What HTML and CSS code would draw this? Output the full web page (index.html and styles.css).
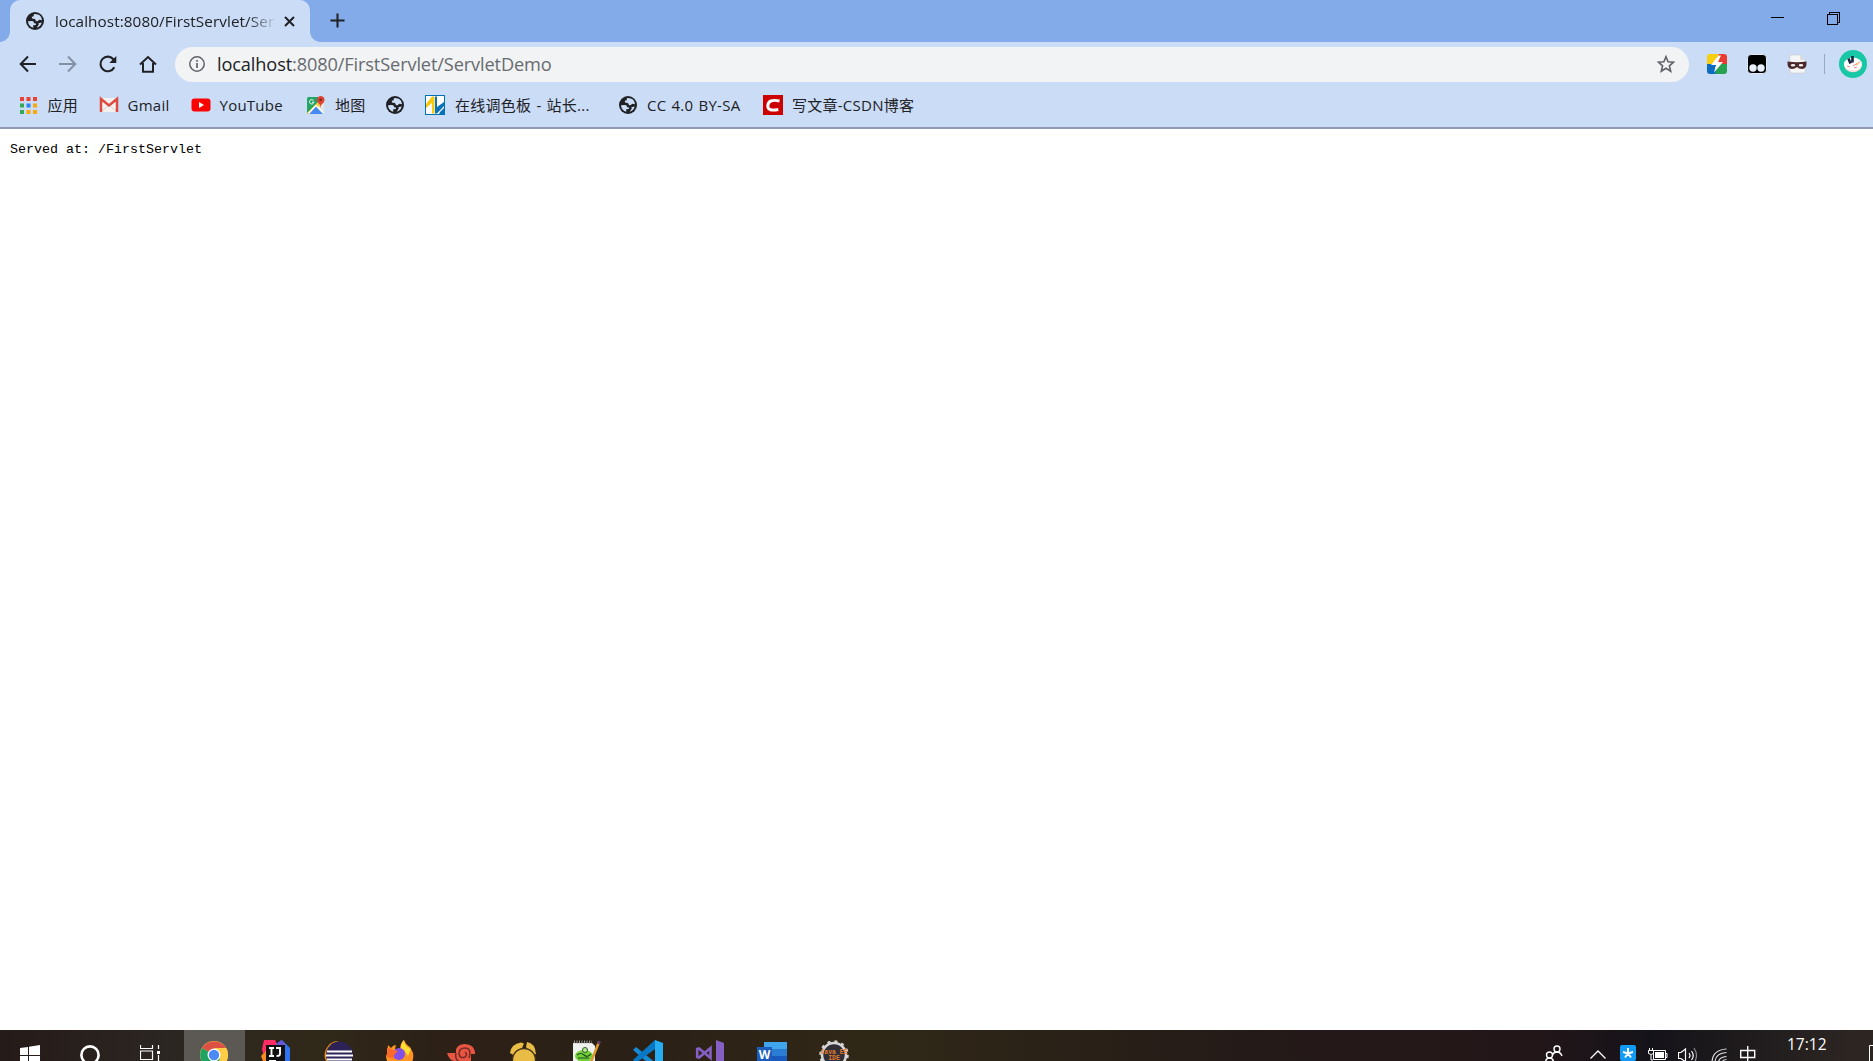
FILE: index.html
```html
<!DOCTYPE html>
<html lang="zh-CN">
<head>
    <meta charset="UTF-8">
    <title>localhost:8080/FirstServlet/ServletDemo</title>
    <link rel="stylesheet" href="styles.css">
</head>
<body>
    <svg class="defs">
        <symbol id="globe" viewBox="0 0 18 18">
            <circle cx="9" cy="9" r="9" fill="#202124"/>
            <path d="M2 9.200 5.600 9.100C7.300 9 8 9.800 8.100 11.200L10 11.400 9.900 13 7.200 13.200 7.300 15.800C4.300 15.200 2.200 12.600 2 9.200ZM8.600 2.100C7.800 2.500 7.500 3.200 7.800 4.300L5.800 4.700 6 6.600 8.700 6.900C9.900 7.100 9.300 9 10.800 9.200 12.600 9.400 12.400 7.600 13.600 7.700L15.900 8.200C15.900 4.800 13.300 2 8.600 2.100ZM15.700 10.500C15 13.400 13.200 15.200 10.600 15.800L12.800 12.600 12.400 11.200Z" fill="#cbdcf6"/>
        </symbol>
    </svg>

    <div class="tab-strip">
        <div class="tab-prev"></div>
        <div class="tab">
            <svg class="favicon"><use href="#globe"/></svg>
            <span class="tab-title">localhost:8080/FirstServlet/Ser</span>
            <svg class="tab-close" viewBox="0 0 11 11"><path d="M1 1l9 9M10 1l-9 9" stroke="#202124" stroke-width="2"/></svg>
        </div>
        <div class="tab-next"></div>
        <svg class="new-tab" viewBox="0 0 16 16"><path d="M8 .5v15M.5 8h15" stroke="#202124" stroke-width="2.200"/></svg>
        <div class="window-buttons">
            <svg width="13" height="13" shape-rendering="crispEdges"><path d="M0 5.500h13" stroke="#000"/></svg>
            <svg width="13" height="13" shape-rendering="crispEdges"><path d="M.5 2.500h10v10H.5zM2.500 2V.5h10v10H11" fill="none" stroke="#000"/></svg>
        </div>
    </div>

    <div class="toolbar">
        <div class="nav-buttons">
            <svg viewBox="0 0 18 18"><path d="M17 9H2M9 1.500 1.700 9 9 16.500" fill="none" stroke="#202124" stroke-width="2"/></svg>
            <svg viewBox="0 0 18 18"><path d="M0 9h15M9 1.500 16.300 9 9 16.500" fill="none" stroke="#8690a3" stroke-width="2"/></svg>
            <svg viewBox="0 0 18 18"><path d="M15.300 12.300A7.300 7.300 0 1 1 14.600 4.500" fill="none" stroke="#202124" stroke-width="2.100"/><path d="M17.300 1v7h-7z" fill="#202124"/></svg>
            <svg viewBox="0 0 18 18"><path d="M1 9.500 9 2l8 7.500M4 8v8.700h10V8" fill="none" stroke="#202124" stroke-width="2"/></svg>
        </div>
        <div class="omnibox">
            <svg class="info" viewBox="0 0 16 16"><circle cx="8" cy="8" r="7.200" fill="none" stroke="#5f6368" stroke-width="1.500"/><path d="M8 7v5M8 4v1.700" stroke="#5f6368" stroke-width="1.700"/></svg>
            <span class="url"><span class="host">localhost</span>:8080/FirstServlet/ServletDemo</span>
            <svg class="star" viewBox="0 0 18 18"><path d="M9 1.700l2.100 5.100 5.500.4-4.200 3.600 1.300 5.400L9 13.300l-4.700 2.900 1.300-5.400L1.400 7.200l5.500-.4z" fill="none" stroke="#5f6368" stroke-width="1.600"/></svg>
        </div>
        <div class="extensions">
            <svg width="20" height="20" viewBox="0 0 20 20">
                <path d="M3 0h9L9 10H0V3q0-3 3-3z" fill="#f6cf10"/>
                <path d="M12 0h5q3 0 3 3v7H8z" fill="#e83a30"/>
                <path d="M0 10h11L9 20H3q-3 0-3-3z" fill="#0b6cc0"/>
                <path d="M11 10h9v7q0 3-3 3H8z" fill="#28a153"/>
                <path d="M11.500 1.500 4 11h5L7 18.500 16 8h-5l3-6.500z" fill="#fff"/>
            </svg>
            <svg width="20" height="20" viewBox="0 0 20 20">
                <rect x=".5" y=".5" width="19" height="19" rx="3.500" fill="#000" stroke="#dfe8f7"/>
                <circle cx="6" cy="14" r="3.700" fill="#e8effb"/><circle cx="14" cy="14" r="3.700" fill="#e8effb"/>
            </svg>
            <svg width="20" height="20" viewBox="0 0 20 20">
                <path d="M3 1h10l5 5v13H3z" fill="#f5f5f5" stroke="#ccc" stroke-width=".6"/><path d="M13 1v5h5" fill="#ddd"/>
                <path d="M.5 7.500Q10 9 19.500 7.500 20 15 15 15q-3 0-5-2-2 2-5 2-5 0-4.500-7.500z" fill="#4a2729"/>
                <ellipse cx="6" cy="11.300" rx="2.300" ry="1.200" fill="#eee"/><ellipse cx="14" cy="11.300" rx="2.300" ry="1.200" fill="#eee"/>
            </svg>
        </div>
        <div class="separator"></div>
        <svg class="avatar" viewBox="0 0 28 28">
            <circle cx="14" cy="14" r="14" fill="#17c7a5"/>
            <path d="M5 14c0 11 18 11 18 0z" fill="#f8dcd9"/>
            <ellipse cx="14" cy="14" rx="9" ry="6.500" fill="#fff"/>
            <path d="M9.500 8.500l2 5M13.500 6v6.500" stroke="#15243c" stroke-width="2.600"/>
            <path d="M14 16l7-4M8 16l3 1M15 18l3-1" stroke="#e98b87"/><circle cx="18" cy="14" r="1" fill="#f5c547"/>
        </svg>
    </div>

    <div class="bookmarks">
        <div class="bookmark apps">
            <svg width="17" height="17" viewBox="0 0 17 17">
                <path d="M0 0h4v4H0zM6.500 0h4v4h-4zM13 0h4v4h-4z" fill="#ea4335"/>
                <path d="M0 6.500h4v4H0zM0 13h4v4H0z" fill="#34a853"/><path d="M6.500 6.500h4v4h-4z" fill="#2b83f6"/>
                <path d="M13 6.500h4v4h-4zM6.500 13h4v4h-4zM13 13h4v4h-4z" fill="#fba70d"/>
            </svg>
            <span>应用</span>
        </div>
        <div class="bookmark gmail">
            <svg width="20" height="20" viewBox="0 0 20 20">
                <path d="M1 3h18v14H1z" fill="#f4f0f0"/><path d="M3 16l7-6 7 6" fill="none" stroke="#d5d3d3"/>
                <path d="M2 17V4l8 6.500L18 4v13" fill="none" stroke="#dd4b3e" stroke-width="2.500"/>
            </svg>
            <span>Gmail</span>
        </div>
        <div class="bookmark youtube">
            <svg width="20" height="20" viewBox="0 0 20 20"><rect x=".5" y="3.500" width="19" height="13" rx="3" fill="#f00"/><path d="M8 7v6l5-3z" fill="#fff"/></svg>
            <span>YouTube</span>
        </div>
        <div class="bookmark maps">
            <svg width="20" height="20" viewBox="0 0 20 20">
                <rect x="1" y="2" width="17" height="17" rx="1.500" fill="#23a566"/>
                <path d="M18 7v12L10 11z" fill="#e4e6e8"/><path d="M1 18 14 5l3 3L6 19H2z" fill="#ffd23f"/>
                <path d="M3 19l7-8 7 8z" fill="#4889f4"/><path d="M2.500 18.500l7.500-8 7.500 8" fill="none" stroke="#fff" stroke-width="1.300"/>
                <path d="M7.500 5.500a2.200 2.200 0 1 0 .4 1.700H6" fill="none" stroke="#fff"/>
                <path d="M14.500 13q-.3-4-2.700-5.500C9.500 4 12 1 14.800 1s5.200 3 2.800 6.500Q15 9 14.500 13z" fill="#e04437"/><circle cx="14.700" cy="4.700" r="1.500" fill="#8d2926"/>
            </svg>
            <span>地图</span>
        </div>
        <div class="bookmark blank"><svg class="favicon"><use href="#globe"/></svg></div>
        <div class="bookmark palette">
            <svg width="20" height="20" viewBox="0 0 20 20">
                <rect x=".5" y=".5" width="19" height="19" fill="#fff" stroke="#0070b8"/>
                <path d="M1 9 7 1.500h2.500v17H7V8l-6 5z" fill="#f6c90e"/><path d="M10 1.500h2V12l7-5v4l-7 7.500h-2z" fill="#0873bb"/><path d="M15 17l4-4v6h-5z" fill="#0873bb"/>
            </svg>
            <span>在线调色板 - 站长...</span>
        </div>
        <div class="bookmark cc">
            <svg class="favicon"><use href="#globe"/></svg>
            <span>CC 4.0 BY-SA</span>
        </div>
        <div class="bookmark csdn">
            <svg width="20" height="20" viewBox="0 0 20 20"><path d="M0 0h20v20H0z" fill="#c00"/><path d="M16.500 6Q5 3.500 4.800 11q0 5.700 10.500 3.500" fill="none" stroke="#fff" stroke-width="3"/></svg>
            <span>写文章-CSDN博客</span>
        </div>
    </div>

    <div class="page">Served at: /FirstServlet</div>

    <div class="taskbar">
        <div class="system">
            <div class="task"><svg width="20" height="20" viewBox="0 0 20 20"><path d="M0 3l8-1v8H0zM9 1.800 20 0v10H9zM0 11h8v8l-8-1zM9 11h11v9L9 19z" fill="#fff"/></svg></div>
            <div class="task"><svg width="20" height="20" viewBox="0 0 20 20"><circle cx="10" cy="10" r="8.600" fill="none" stroke="#fff" stroke-width="2.600"/></svg></div>
            <div class="task"><svg width="20" height="20" viewBox="0 0 20 20"><path d="M.5 0v3.500h12V0M.5 6h12v8.500H.5zM.5 20v-3.500h12V20M18.500 0v4M18.500 10v10" fill="none" stroke="#fff" stroke-width="1.200"/><path d="M17 6h3v3h-3z" fill="#fff"/></svg></div>
        </div>
        <div class="apps-row">
            <div class="task active"><svg class="app" viewBox="0 0 28 28">
                <circle cx="14" cy="14" r="14" fill="#ffcd46"/><path d="M14 14 2 7a14 14 0 0 1 24 0z" fill="#dd5144"/><path d="M2 7a14 14 0 0 0 12 21l6-10-6-4z" fill="#1da362"/><path d="M14 7h12.100L22 14z" fill="#dd5144"/><path d="M14 7h12.100a14 14 0 0 1-6 19.600L20 14z" fill="#ffcd46"/>
                <circle cx="14" cy="14" r="6.500" fill="#fff"/><circle cx="14" cy="14" r="5.200" fill="#4c8bf5"/></svg></div>
            <div class="task"><svg class="app wide" viewBox="0 0 30 30">
                <path d="M3 0h11l3 6-4 12H3L1 9z" fill="#ff2d63"/><path d="M0 16l5-5v10H2z" fill="#fa8c24"/><path d="M15 4l6-4 8 8v22H15z" fill="#2e74f0"/><path d="M16 4l4-4 5 5-5 4z" fill="#6856d8"/><path d="M5 5h19v19H5z" fill="#111"/>
                <path d="M8 8h5M10.500 8v8M8 16h5M15 8h4v6q0 2-3.500 2" fill="none" stroke="#fff" stroke-width="1.900"/><path d="M8 21h7" stroke="#fff" stroke-width="2"/></svg></div>
            <div class="task"><svg class="app wide" viewBox="0 0 30 30">
                <path d="M16 1A14 14 0 0 0 5 24l4-2L8 4z" fill="#f7941e"/><circle cx="16.500" cy="15" r="13.500" fill="#2c2255"/><path d="M4 11.500h25M3 15.500h27M4 19.500h25" stroke="#fff" stroke-width="2.200"/></svg></div>
            <div class="task"><svg class="app wide" viewBox="0 0 30 30">
                <path d="M2 14 3 5l3 3q2-3 5-3l-1 4 5 1q0-7 4-10 2 5 6 7l2 4q2 2 1 8-2 9-14 9T1 16z" fill="#ff9323"/><path d="M19 0q0 6 7 9l-3 7-4-6-3-2q0-5 3-8z" fill="#ffdf34"/><circle cx="14" cy="14" r="6" fill="#8150e8"/><path d="M2 8q3 0 6 2l5 1-3 3q-3 3 0 5l-8-2z" fill="#ff6a2b"/></svg></div>
            <div class="task"><svg class="app wide" viewBox="0 0 30 30">
                <path d="M0 13h9q-1-8 8-9 11 0 11 10H24v9q-10 5-17-2-5-1-7-8z" fill="#e85643"/><path d="M22 18q3-10-4-10-6 0-6 6 1 5 6 3 3-3 0-5M9 13q-2 9 8 10" fill="none" stroke="#722b23" stroke-width="1.500"/></svg></div>
            <div class="task"><svg class="app wide" viewBox="0 0 30 30">
                <path d="M1 13Q2 4 12 2.500l3 1-3 7-7 5zM18 2q8 1 9 12l-4 1-6-8z" fill="#e9bd45"/><circle cx="15" cy="20" r="11.500" fill="#e9bd45" stroke="#43311c" stroke-width="1.400"/></svg></div>
            <div class="task"><svg class="app wide" viewBox="0 0 30 30">
                <path d="M2 3h19l3 3v24H2z" fill="#eef1ee"/><path d="M3 2h18" stroke="#999" stroke-width="3" stroke-dasharray="1 1.500"/><ellipse cx="13" cy="16" rx="9" ry="6" fill="#72cf38"/><circle cx="14" cy="10" r="2.500" fill="#b5ed8e" stroke="#34572e"/><path d="M6 15q4-3 7 0t7-1M7 18h11" fill="none" stroke="#1c4a1c" stroke-width="1.200"/><path d="M28 2 20 22" stroke="#d99a31" stroke-width="2.600"/><path d="M28.500 1l-1 3" stroke="#5e3b62" stroke-width="3"/></svg></div>
            <div class="task"><svg class="app wide" viewBox="0 0 30 30">
                <path d="M0 10l3-3 20 16v7z" fill="#168ad4"/><path d="M0 20 22 0v9L3 23z" fill="#0878c5"/><path d="M22 0l8 3v27h-8z" fill="#27adf2"/></svg></div>
            <div class="task"><svg class="app wide" viewBox="0 0 30 30">
                <path d="M21 0l8 3v24l-8 3z" fill="#865fc5"/><path d="M2.200 9 4 8.500l11.500 9.500V8L4 17.500 2.200 17z" fill="none" stroke="#865fc5" stroke-width="2.600"/></svg></div>
            <div class="task"><svg class="app wide" viewBox="0 0 30 30">
                <path d="M7 2h23v7H7z" fill="#41a5ee"/><path d="M7 9h23v7H7z" fill="#2b7cd3"/><path d="M7 16h23v14H7z" fill="#185abd"/><path d="M0 7h15v15H0z" fill="#1b5cbf"/><text x="7.500" y="18.500" class="word-letter">W</text></svg></div>
            <div class="task"><svg class="app wide" viewBox="0 0 30 30">
                <circle cx="15" cy="15" r="12" fill="#302f38" stroke="#d6d6d6" stroke-width="2.500"/><circle cx="15" cy="15" r="13.500" fill="none" stroke="#d6d6d6" stroke-width="2.500" stroke-dasharray="3 4.070"/><text x="15" y="13.500" class="jee">Java EE</text><text x="15" y="19.500" class="jee">IDE</text></svg></div>
        </div>
        <div class="tray">
            <svg class="people" viewBox="0 0 18 18"><g fill="none" stroke="#fff" stroke-width="1.400"><circle cx="12" cy="4" r="3"/><path d="M7.500 10q1-3 4.500-3t5 4"/><circle cx="4.500" cy="10" r="3"/><path d="M.5 18q0-5 4-5t4 5"/></g></svg>
            <svg class="caret" viewBox="0 0 16 16"><path d="M.5 13.500 8 6l7.500 7.500" fill="none" stroke="#fff" stroke-width="1.300"/></svg>
            <svg class="asterisk" viewBox="0 0 16 16"><rect width="16" height="16" rx="2" fill="#129bf4"/><path d="M8 3v5.500M3 7l5 1.500L13 7M5 12.500l3-4 3 4" stroke="#fff" stroke-width="2" fill="none"/></svg>
            <svg class="battery" viewBox="0 0 20 16"><path d="M5.500 2.500h12v9h-12zM18 5.500h1v4h-1" fill="none" stroke="#fff"/><path d="M7 4h9v6H7z" fill="#fff"/><path d="M1.500 2V0M4.500 2V0M.5 2.500h5v3q-2.500 2-5 0zM3 7v5h2" fill="none" stroke="#fff"/></svg>
            <svg class="volume" viewBox="0 0 20 16"><g fill="none" stroke="#fff" stroke-width="1.200"><path d="M.5 5.500H3L7.500 2v13L3 11.500H.5zM11 6q2 2.500 0 5M13.500 4q3.500 4.500 0 9"/><path d="M16 1q5 7.500 0 15" opacity=".5"/></g></svg>
            <svg class="wifi" viewBox="0 0 16 16"><g fill="none" stroke="#ddd" stroke-width="1.200"><path d="M1 16Q1 3 15.500 2M4 16Q4 6 15.500 5.500M7.500 16q0-6 8-6.500M11 16q0-3 4.500-3.500"/></g></svg>
            <svg class="ime" viewBox="0 0 16 16"><path d="M.7 5.500h14v7H.7zM7.700 1v15" fill="none" stroke="#fff" stroke-width="1.400"/></svg>
            <span class="clock">17:12</span>
            <svg class="notice" viewBox="0 0 4 16"><path d="M4 .5H.5V16" fill="none" stroke="#fff"/></svg>
        </div>
    </div>
</body>
</html>
```
FILE: styles.css
```css
* {
    margin: 0;
    padding: 0;
    box-sizing: border-box;
}

body {
    height: 100vh;
    display: flex;
    flex-direction: column;
    overflow: hidden;
    background: #fff;
    color: #202124;
    font-family: "Open Sans", "Noto Sans CJK SC", sans-serif;
}

svg {
    display: block;
    flex-shrink: 0;
}

.defs {
    display: none;
}

.favicon {
    width: 18px;
    height: 18px;
}

/* tabs */
.tab-strip {
    height: 42px;
    flex-shrink: 0;
    display: flex;
    background: #84abe9;
}

.tab-prev,
.tab-next {
    width: 10px;
    height: 10px;
    margin-top: 32px;
}

.tab-prev {
    background: radial-gradient(circle at 0 0, transparent 9.5px, #cbdcf6 10px);
}

.tab-next {
    background: radial-gradient(circle at 100% 0, transparent 9.5px, #cbdcf6 10px);
}

.tab {
    width: 300px;
    display: flex;
    align-items: center;
    padding: 0 15px 0 16px;
    border-radius: 10px 10px 0 0;
    background: #cbdcf6;
}

.tab-title {
    width: 219px;
    margin-left: 11px;
    white-space: nowrap;
    font-size: 15.3px;
    letter-spacing: 0.07px;
    mask-image: linear-gradient(90deg, #000 192px, transparent 222px);
}

.tab-close {
    width: 11px;
    height: 11px;
    margin-left: 10px;
}

.new-tab {
    width: 15px;
    height: 15px;
    margin: 13px 0 0 10px;
}

.window-buttons {
    display: flex;
    gap: 43px;
    margin: 12px 33px 0 auto;
}

/* toolbar */
.toolbar {
    height: 43px;
    flex-shrink: 0;
    display: flex;
    align-items: center;
    padding-top: 1px;
    background: #cbdcf6;
}

.nav-buttons {
    width: 175px;
    display: flex;
    gap: 22px;
    padding-left: 18.5px;
}

.nav-buttons svg {
    width: 18px;
    height: 18px;
}

.omnibox {
    width: 1514px;
    height: 35px;
    display: flex;
    align-items: center;
    padding: 0 14px 0 14px;
    border-radius: 18px;
    background: #f1f3f4;
}

.info {
    width: 16px;
    height: 16px;
}

.url {
    margin-left: 12px;
    color: #686b6f;
    font-size: 18.2px;
    letter-spacing: -0.13px;
    white-space: nowrap;
}

.host {
    color: #202124;
}

.star {
    width: 18px;
    height: 18px;
    margin-left: auto;
}

.extensions {
    display: flex;
    gap: 20px;
    margin-left: 17.500px;
}

.separator {
    width: 1px;
    height: 20px;
    margin-left: 17.500px;
    background: #96a8c3;
}

.avatar {
    width: 28px;
    height: 28px;
    margin-left: 14px;
}

/* bookmarks */
.bookmarks {
    height: 44px;
    flex-shrink: 0;
    display: flex;
    align-items: center;
    padding: 0 0 2px 19.5px;
    background: #cbdcf6;
    border-bottom: 2px solid #8d9cb1;
}

.bookmark {
    display: flex;
    align-items: center;
    font-size: 15px;
    line-height: 20px;
    letter-spacing: 0.25px;
    word-spacing: 1px;
    white-space: nowrap;
}

.apps { width: 79px; gap: 11px; }
.gmail { width: 92px; gap: 9px; }
.youtube { width: 115.5px; gap: 9px; }
.maps { width: 80px; gap: 9px; }
.blank { width: 39px; }
.palette { width: 194px; gap: 10px; }
.cc { width: 144px; gap: 10px; }
.csdn { gap: 9px; }

/* page */
.page {
    flex: 1;
    padding: 13px 10px;
    color: #000;
    font: 13.33px/16px "Liberation Mono", monospace;
}

/* taskbar */
.taskbar {
    height: 31px;
    flex-shrink: 0;
    display: flex;
    overflow: hidden;
    background: linear-gradient(90deg, #251b18 0, #2c2622 170px, #302919 320px, #2c2017 450px, #2b2016 640px, #302817 880px, #241a18 1250px, #231618 1530px, #15131a 1650px, #1c191c 1720px, #2c2522 1850px);
}

.system,
.apps-row {
    display: flex;
}

.apps-row {
    gap: 1px;
    margin-left: 4px;
}

.task {
    width: 60px;
    height: 48px;
    display: flex;
    justify-content: center;
    padding-top: 15px;
}

.apps-row .task {
    width: 61px;
    padding: 10px 2px 0 0;
}

.apps-row .active {
    padding-top: 11px;
    background: #5c5853;
}

.app {
    width: 28px;
    height: 28px;
}

.app.wide {
    width: 30px;
    height: 30px;
}

.word-letter {
    fill: #fff;
    font: bold 12px "Open Sans", sans-serif;
    text-anchor: middle;
}

.jee {
    fill: #e17a2d;
    font: bold 6.5px "Liberation Mono", monospace;
    text-anchor: middle;
}

.tray {
    display: flex;
    align-items: flex-start;
    margin-left: auto;
    padding-top: 15px;
}

.people { width: 18px; height: 18px; margin-right: 27px; }
.caret { width: 16px; height: 16px; margin-right: 14px; }
.asterisk { width: 16px; height: 16px; margin-right: 12px; }
.battery { width: 20px; height: 16px; margin: 3px 10px 0 0; }
.volume { width: 20px; height: 16px; margin: 2px 13px 0 0; }
.wifi { width: 16px; height: 16px; margin: 2px 13px 0 0; }
.ime { width: 16px; height: 16px; margin-right: 31px; }

.clock {
    width: 42px;
    margin: -11px 40px 0 0;
    color: #fff;
    font-size: 15.5px;
    line-height: 20px;
}

.notice {
    width: 4px;
    height: 16px;
}
```
